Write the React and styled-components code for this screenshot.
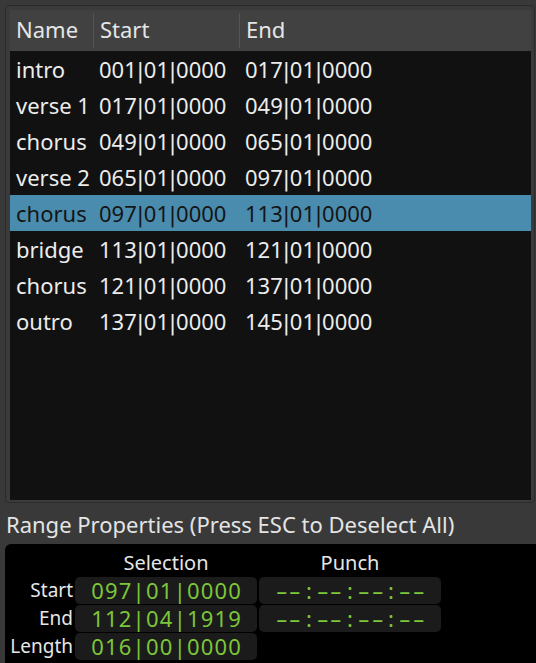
import React from 'react';
import styled, { createGlobalStyle } from 'styled-components';

const GlobalStyle = createGlobalStyle`
  html, body {
    margin: 0;
    padding: 0;
    background: #393939;
  }
  body {
    font-family: "Noto Sans", "Open Sans", sans-serif;
    color: #e8e8e8;
  }
`;

const ranges = [
  { name: 'intro', start: '001|01|0000', end: '017|01|0000' },
  { name: 'verse 1', start: '017|01|0000', end: '049|01|0000' },
  { name: 'chorus', start: '049|01|0000', end: '065|01|0000' },
  { name: 'verse 2', start: '065|01|0000', end: '097|01|0000' },
  { name: 'chorus', start: '097|01|0000', end: '113|01|0000', selected: true },
  { name: 'bridge', start: '113|01|0000', end: '121|01|0000' },
  { name: 'chorus', start: '121|01|0000', end: '137|01|0000' },
  { name: 'outro', start: '137|01|0000', end: '145|01|0000' },
];

const clocks = [
  { label: 'Start', selection: '097|01|0000', punch: '--:--:--:--' },
  { label: 'End', selection: '112|04|1919', punch: '--:--:--:--' },
  { label: 'Length', selection: '016|00|0000' },
];

// bar-separated time; the bars use a narrower face so they sit tight
function BBT({ value }) {
  const parts = value.split('|');
  return parts.map((p, i) => (
    <React.Fragment key={i}>
      {i > 0 && <Sep>|</Sep>}
      {p}
    </React.Fragment>
  ));
}

// clock readout: every character sits in a fixed cell, like a monospace clock face
function ClockText({ value }) {
  return value.split('').map((ch, i) => (
    <Glyph key={i} dash={ch === '-'}>{ch}</Glyph>
  ));
}

export default function App() {
  return (
    <Page>
      <GlobalStyle />
      <Frame>
        <HeaderRow>
          <HeaderCell>Name</HeaderCell>
          <HeaderCell divider>Start</HeaderCell>
          <HeaderCell divider>End</HeaderCell>
        </HeaderRow>
        <ListBody>
          {ranges.map((r, i) => (
            <Row key={i} selected={r.selected}>
              <Cell>{r.name}</Cell>
              <Cell><BBT value={r.start} /></Cell>
              <Cell><BBT value={r.end} /></Cell>
            </Row>
          ))}
        </ListBody>
      </Frame>
      <SectionTitle>Range Properties (Press ESC to Deselect All)</SectionTitle>
      <ClockPanel>
        <span />
        <ColumnTitle>Selection</ColumnTitle>
        <ColumnTitle>Punch</ColumnTitle>
        {clocks.map((c) => (
          <React.Fragment key={c.label}>
            <ClockLabel>{c.label}</ClockLabel>
            <Clock><ClockText value={c.selection} /></Clock>
            {c.punch ? <Clock><ClockText value={c.punch} /></Clock> : <span />}
          </React.Fragment>
        ))}
      </ClockPanel>
    </Page>
  );
}

const Page = styled.div`
  display: flex;
  flex-direction: column;
  width: 536px;
  height: 663px;
  overflow: hidden;
`;

const Frame = styled.div`
  display: flex;
  flex-direction: column;
  height: 498px;
  margin: 5px 1px 0 5px;
  padding: 4px 3px 2px 4px;
  border: 1px solid #2b2b2b;
  border-radius: 4px;
  background: #3b3b3b;
  box-sizing: border-box;
`;

const HeaderRow = styled.div`
  display: grid;
  grid-template-columns: 83px 146px 1fr;
  height: 41px;
  background: #414141;
  flex-shrink: 0;
`;

const HeaderCell = styled.div`
  display: flex;
  align-items: center;
  padding: 0 0 3px 6px;
  font-size: 22px;
  color: #e6e6e6;
  border-left: ${(p) => (p.divider ? '1px solid #555555' : 'none')};
  margin: ${(p) => (p.divider ? '3px 0' : '0')};
`;

const ListBody = styled.div`
  flex: 1;
  background: #111111;
`;

const Row = styled.div`
  display: grid;
  grid-template-columns: 83px 146px 1fr;
  height: 36px;
  align-items: center;
  background: ${(p) => (p.selected ? '#4a8cad' : 'transparent')};
  color: ${(p) => (p.selected ? '#151515' : '#ececec')};
`;

const Cell = styled.div`
  padding-left: 6px;
  font-size: 22px;
  white-space: nowrap;
`;

const Sep = styled.span`
  font-family: "DejaVu Sans", sans-serif;
  font-size: 21px;
`;

const SectionTitle = styled.div`
  height: 41px;
  display: flex;
  align-items: center;
  padding-left: 6px;
  font-size: 22px;
  color: #e4e4e4;
  flex-shrink: 0;
`;

const ClockPanel = styled.div`
  flex: 1;
  margin-left: 5px;
  background: #000000;
  border-top-left-radius: 6px;
  display: grid;
  grid-template-columns: 68px 182px 182px;
  grid-template-rows: 32px 27px 27px 27px;
  column-gap: 2px;
  row-gap: 1px;
  align-content: start;
`;

const ColumnTitle = styled.div`
  display: flex;
  align-items: flex-end;
  justify-content: center;
  font-size: 20px;
  color: #e6e6e6;
`;

const ClockLabel = styled.div`
  display: flex;
  align-items: center;
  justify-content: flex-end;
  padding-bottom: 1px;
  font-size: 19px;
  color: #e6e6e6;
`;

const Clock = styled.div`
  display: flex;
  align-items: center;
  justify-content: center;
  padding-bottom: 2px;
  background: #1b1b1b;
  border-radius: 5px;
  font-size: 22px;
  color: #7cc63a;
`;

const Glyph = styled.span`
  display: inline-block;
  width: 13.7px;
  text-align: center;
  transform: ${(p) => (p.dash ? 'scaleX(1.7)' : 'none')};
`;
